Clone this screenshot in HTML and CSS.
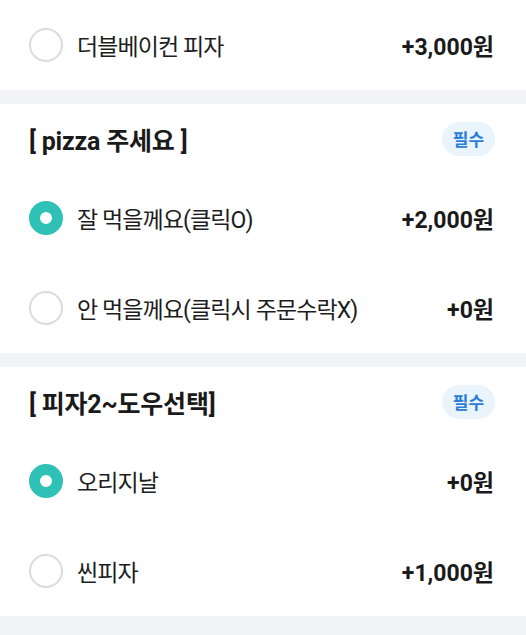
FILE: index.html
```html
<!DOCTYPE html>
<html lang="ko">
<head>
<meta charset="utf-8">
<link rel="stylesheet" href="styles.css">
</head>
<body>
  <section class="group">
    <div class="item">
      <span class="radio"></span>
      <span class="label">더블베이컨 피자</span>
      <span class="price">+3,000원</span>
    </div>
  </section>
  <div class="divider"></div>
  <section class="group">
    <div class="head">
      <h2 class="title">[ pizza 주세요 ]</h2>
      <span class="badge">필수</span>
    </div>
    <div class="item">
      <span class="radio checked"></span>
      <span class="label">잘 먹을께요(클릭O)</span>
      <span class="price">+2,000원</span>
    </div>
    <div class="item">
      <span class="radio"></span>
      <span class="label">안 먹을께요(클릭시 주문수락X)</span>
      <span class="price">+0원</span>
    </div>
  </section>
  <div class="divider"></div>
  <section class="group">
    <div class="head">
      <h2 class="title">[ 피자2~도우선택]</h2>
      <span class="badge">필수</span>
    </div>
    <div class="item">
      <span class="radio checked"></span>
      <span class="label">오리지날</span>
      <span class="price">+0원</span>
    </div>
    <div class="item">
      <span class="radio"></span>
      <span class="label">씬피자</span>
      <span class="price">+1,000원</span>
    </div>
  </section>
  <div class="divider last"></div>
</body>
</html>
```

FILE: styles.css
```css
html, body {
  margin: 0;
  padding: 0;
  background: #ffffff;
}
body {
  font-family: Roboto, "Noto Sans CJK KR", sans-serif;
  color: #1d1d1d;
}
.group {
  background: #ffffff;
}
.divider {
  height: 14px;
  background: #f3f4f7;
}
.divider.last {
  height: 24px;
}
.head {
  height: 69px;
  display: flex;
  align-items: center;
  justify-content: space-between;
  padding: 0 31px 0 29px;
}
.title {
  margin: 0;
  font-size: 25px;
  font-weight: 700;
  letter-spacing: -0.2px;
  color: #1a1a1a;
}
.badge {
  display: inline-flex;
  align-items: center;
  justify-content: center;
  width: 53px;
  height: 34px;
  border-radius: 17px;
  background: #e9f4fd;
  color: #2b7bd8;
  font-size: 17px;
  font-weight: 700;
  font-family: "Noto Sans CJK KR", sans-serif;
}
.item {
  height: 90px;
  display: flex;
  align-items: center;
  padding: 0 32px 0 29px;
}
.radio {
  width: 34px;
  height: 34px;
  box-sizing: border-box;
  border: 2px solid #dcdcdc;
  border-radius: 50%;
  flex: none;
  background: #ffffff;
}
.radio.checked {
  border: 11.5px solid #2fc1b5;
  background: #ffffff;
}
.label {
  margin-left: 14px;
  font-size: 23px;
  letter-spacing: -0.9px;
  flex: 1;
  color: #1d1d1d;
}
.price {
  font-size: 23px;
  font-weight: 700;
  color: #1a1a1a;
  letter-spacing: 0;
}
```
